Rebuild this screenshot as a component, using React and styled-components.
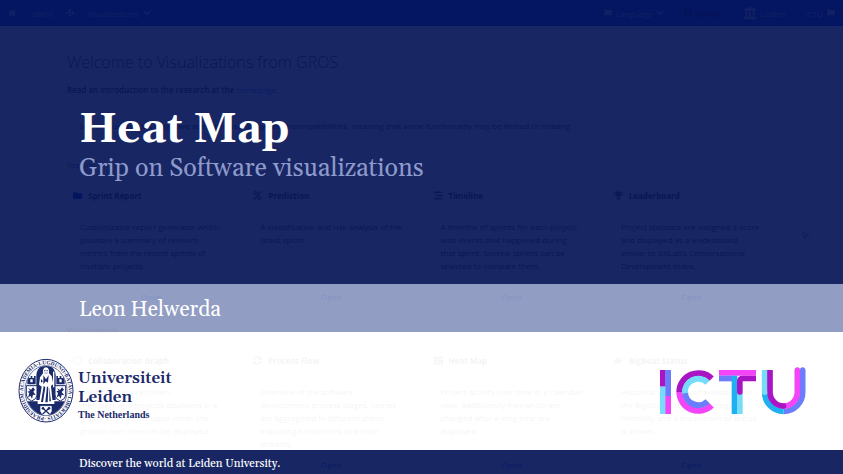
import React from 'react';
import styled, { createGlobalStyle, css } from 'styled-components';
import {
  FaHome, FaArrowsAlt, FaChevronDown, FaFlag, FaGithub, FaUniversity, FaFolder, FaPercent,
  FaStream, FaTrophy, FaRegCircle, FaSyncAlt, FaTh, FaDocker,
} from 'react-icons/fa';
import { MousePointer2 } from 'lucide-react';

const Global = createGlobalStyle`
  * { box-sizing: border-box; }
  body { margin: 0; background: #192664; }
  h1, h2, h3, p { margin: 0; }
`;

const serif = `Gelasio, Georgia, "Liberation Serif", serif`;

const Stage = styled.div`
  position: relative;
  height: 100vh;
  min-height: 474px;
  overflow: hidden;
`;

/* Dashboard page beneath the title card */
const Page = styled.div`
  background: #fff;
  color: #363636;
  font: 8px/13px "Open Sans", "Noto Sans", sans-serif;
`;

const NavBar = styled.nav`
  display: flex;
  align-items: center;
  justify-content: space-between;
  height: 26px;
  padding: 0 8px;
  background: #0025e1;
`;

const NavGroup = styled.div`
  display: flex;
  align-items: center;
  gap: ${(p) => p.$gap}px;
`;

const NavButton = styled.button`
  display: flex;
  align-items: center;
  gap: ${(p) => p.$gap || 4}px;
  padding: 0;
  border: 0;
  background: none;
  color: ${(p) => (p.$dark ? '#000' : '#b4c0f0')};
  font: inherit;
`;

const Main = styled.main`
  padding: 26px 67px 0;
`;

const PageTitle = styled.h1`
  font-size: 16px;
  font-weight: 300;
  line-height: 20px;
`;

const Intro = styled.p`
  margin-top: 12px;
  line-height: 12px;
  font-weight: 600;
  a { color: #3273dc; font-weight: 400; text-decoration: none; }
`;

const Notice = styled.p`
  margin-top: 14px;
  padding: 10px 12px;
  line-height: 12px;
  border-radius: 3px;
  background: #f5f5f5;
`;

const SectionTitle = styled.h2`
  margin: ${(p) => p.$top}px 0 14px;
  font-size: 8px;
  line-height: 12px;
  font-weight: 400;
  color: #777;
`;

const CardGrid = styled.div`
  display: grid;
  grid-template-columns: repeat(4, 1fr);
  gap: 12px;
`;

const Card = styled.article`
  display: flex;
  flex-direction: column;
  min-height: 127px;
  border: 1px solid #f6f6f6;
`;

const CardTitle = styled.h3`
  display: flex;
  align-items: center;
  gap: 6px;
  height: 19px;
  padding: 0 5px;
  font-size: 8px;
  font-weight: 700;
  border-bottom: 1px solid #f4f4f4;
  svg { width: 9px; height: 9px; color: ${(p) => p.$tint}; }
`;

const CardText = styled.p`
  flex: 1;
  padding: 15px 12px 0;
  white-space: pre-line;
`;

const CardLink = styled.a`
  padding: 8px 0;
  text-align: center;
  color: #3273dc;
  text-decoration: none;
`;

const Pointer = styled(MousePointer2)`
  position: absolute;
  left: 95%;
  top: 230px;
  width: 9px;
  height: 11px;
  color: #555;
`;

/* Title card laid over the dashboard */
const TitleCard = styled.div`
  position: absolute;
  inset: 0;
  display: grid;
  grid-template-rows: 1fr 48px 118px 24px;
  font-family: ${serif};
  color: #fff;
`;

const bands = {
  navy: css`background: rgba(4, 19, 87, 0.92);`,
  lavender: css`background: rgba(137, 149, 190, 0.92);`,
  white: css`background: rgba(255, 255, 255, 0.94);`,
};

const Band = styled.section`
  display: flex;
  flex-direction: ${(p) => (p.$column ? 'column' : 'row')};
  align-items: ${(p) => (p.$column ? 'flex-start' : 'center')};
  padding: 3px 35px 0 79px;
  ${(p) => bands[p.$tone]}
`;

const HeadBand = styled(Band)`
  padding-top: 105px;
`;

const LogoBand = styled(Band)`
  justify-content: space-between;
  padding-top: 0;
  padding-left: 18px;
`;

const Heading = styled.h1`
  font-size: 42px;
  line-height: 50px;
  font-weight: 700;
`;

const Subtitle = styled.p`
  font-size: 25px;
  line-height: 28px;
  color: #8d9acb;
`;

const Author = styled.p`
  font-size: 21px;
  line-height: 28px;
`;

const Motto = styled.p`
  font-size: 11px;
  line-height: 16px;
  font-weight: 500;
`;

const University = styled.div`
  display: flex;
  align-items: center;
  gap: 4px;
  color: #1b2a6b;
`;

const UniversityText = styled.div`
  padding-top: 9px;
`;

const UniversityName = styled.div`
  font-size: 16px;
  line-height: 19px;
  font-weight: 600;
`;

const Country = styled.div`
  font: 700 10px/16px "Liberation Serif", serif;
`;

const SealSvg = styled.svg`
  width: 56px;
  height: 66px;
`;

const IctuSvg = styled.svg`
  width: 150px;
  height: 50px;
`;

function Seal() {
  return (
    <SealSvg viewBox="23 24 168 198" role="img" aria-label="Seal of Leiden University">
      <defs>
        <path id="sealRing" d="M107 201A68 79 0 0 1 107 43A68 79 0 0 1 107 201" />
        <clipPath id="sealInner"><ellipse cx="107" cy="122" rx="62" ry="74" /></clipPath>
      </defs>
      <ellipse cx="107" cy="122" rx="81" ry="94" fill="#fff" stroke="#1b2a6b" strokeWidth="3" />
      <text fill="#1b2a6b" fontSize="16" fontWeight="700" fontFamily="Liberation Serif">
        <textPath href="#sealRing">·PRAESIDIUM·ACADEMIA·LUGDUNO·BATAVA·LIBERTATIS</textPath>
      </text>
      <ellipse cx="107" cy="122" rx="63" ry="75" fill="#fff" stroke="#1b2a6b" strokeWidth="2" />
      <g clipPath="url(#sealInner)" fill="#1b2a6b">
        <path d="M78 150V75Q80 48 107 46Q134 48 136 75V150Z" />
        <path d="M40 154H82V162H132V154H174V210H40Z" />
        <path d="M51 84V78H56V84H61V78H66V84H71V78H76V103H51Z" />
        <path d="M138 84V78H143V84H148V78H153V84H158V78H163V103H138Z" />
        <path d="M48 107H80V135Q80 147 64 153Q48 147 48 135Z" fill="#fff" stroke="#1b2a6b" strokeWidth="3" />
        <path d="M134 107H166V135Q166 147 150 153Q134 147 134 135Z" fill="#fff" stroke="#1b2a6b" strokeWidth="3" />
        <path d="M54 114L62 119L68 112L74 119L69 125L76 135L68 134L65 146L60 137L53 143L57 129L51 125L59 123Z" />
        <path d="M140 114L149 120L155 112L161 119L154 126L162 136L154 134L151 146L146 137L139 143L143 129L138 124L145 122Z" />
        <path d="M60 88h7v9h-7zM147 88h7v9h-7z" fill="#fff" />
        <path d="M98 70Q96 53 107 52Q118 53 116 70L124 78L129 102L122 108L127 158H86L94 110L86 104L89 82Z" fill="#fff" />
        <path d="M102 60h3v4h-3zM109 60h3v4h-3zM102 68h10v2h-10zM99 76L107 88L115 76L113 98L106 94L99 103ZM100 108L105 112L98 156H92ZM110 108L114 114L112 157H105ZM117 112L122 154H117ZM92 87L98 94L92 98Z" />
        <path d="M128 66L132 63V112H128Z" fill="#fff" />
        <path d="M91 169H123V183Q123 191 107 199Q91 191 91 183Z" fill="#fff" stroke="#fff" strokeWidth="2" />
        <path d="M97 174L117 192M117 174L97 192" stroke="#1b2a6b" strokeWidth="4" />
        <circle cx="98" cy="175" r="4" /><circle cx="116" cy="175" r="4" />
      </g>
    </SealSvg>
  );
}

function IctuLogo() {
  return (
    <IctuSvg viewBox="54 48 450 150" role="img" aria-label="ICTU">
      <path d="M60 60h17v50h-17z" fill="#a914c4" />
      <path d="M60 110h17v82h-17z" fill="#75dcfa" />
      <path d="M76 60h17v79h-17z" fill="#6b7dfa" />
      <path d="M76 138h17v54h-17z" fill="#f345f7" />
      <g fill="none" strokeWidth="18">
        <path d="M118 126A57 57 0 0 0 215 166" stroke="#f345f7" />
        <path d="M118 126A57 57 0 0 1 215 86" stroke="#a914c4" />
        <path d="M135 126A40 40 0 0 0 203 154" stroke="#6b7dfa" />
        <path d="M203 98A40 40 0 0 0 135 130" stroke="#75dcfa" />
      </g>
      <path d="M237 60h111v17H237z" fill="#f345f7" />
      <path d="M237 77h40v17h-40z" fill="#6b7dfa" />
      <path d="M275 77h17v115h-17z" fill="#1fb0f1" />
      <path d="M291 128h17v64h-17z" fill="#75dcfa" />
      <path d="M291 94Q291 77 308 77H348V94H308V126Q308 134 300 134Q291 134 291 126Z" fill="#a914c4" />
      <g fill="none" strokeWidth="17">
        <path d="M488 60V127A57 57 0 0 1 431 184" stroke="#6b7dfa" />
        <path d="M472 60V127A41 41 0 0 1 431 168" stroke="#f345f7" />
        <path d="M374 127A57 57 0 0 0 431 184" stroke="#1fb0f1" />
        <path d="M374 60V127" stroke="#75dcfa" />
        <path d="M390 60V127A41 41 0 0 0 431 168" stroke="#a914c4" />
      </g>
      <circle cx="374" cy="127" r="8" fill="#75dcfa" />
      <circle cx="431" cy="168" r="8" fill="#a914c4" />
      <circle cx="472" cy="60" r="8" fill="#f345f7" />
      <circle cx="488" cy="60" r="8" fill="#6b7dfa" />
    </IctuSvg>
  );
}

const reports = [
  { title: 'Sprint Report', icon: FaFolder, tint: '#0020a0', text: 'Customizable report generator which\nprovides a summary of relevant\nmetrics from the recent sprints of\nmultiple projects.' },
  { title: 'Prediction', icon: FaPercent, text: 'A classification and risk analysis of the\nlatest sprint.' },
  { title: 'Timeline', icon: FaStream, text: 'A timeline of sprints for each project,\nwith events that happened during\nthat sprint. Several sprints can be\nselected to compare them.' },
  { title: 'Leaderboard', icon: FaTrophy, text: 'Project statistics are assigned a score\nand displayed as a leaderboard,\nsimilar to GitLab’s Conversational\nDevelopment Index.' },
];

const graphs = [
  { title: 'Collaboration Graph', icon: FaRegCircle, text: 'Relations between team\nmembers and projects displayed in a\ngraph. With a time lapse mode the\ngrowth over time can be displayed.' },
  { title: 'Process Flow', icon: FaSyncAlt, text: 'Overview of the software\ndevelopment process stages. Stories\nare aggregated in different states,\nindicating bottlenecks and main\nstreams.' },
  { title: 'Heat Map', icon: FaTh, text: 'Project activity over time in a calendar\nview. Additionally files which are\nchanged after a long time are\ndisplayed.' },
  { title: 'BigBoat Status', icon: FaDocker, tint: '#4060a0', text: 'Historical overview of availability of\nthe BigBoat platform. Aggregated\nreliability and a breakdown of status\nis shown.' },
];

function Cards({ items }) {
  return (
    <CardGrid>
      {items.map(({ title, icon: Icon, tint, text }) => (
        <Card key={title}>
          <CardTitle $tint={tint || '#555'}><Icon />{title}</CardTitle>
          <CardText>{text}</CardText>
          <CardLink href="#open">Open</CardLink>
        </Card>
      ))}
    </CardGrid>
  );
}

export default function App() {
  return (
    <Stage>
      <Global />
      <Page>
        <NavBar>
          <NavGroup $gap={13}>
            <NavButton $gap={16}><FaHome />GROS</NavButton>
            <NavButton><FaArrowsAlt /></NavButton>
            <NavButton $gap={5}>Visualizations<FaChevronDown /></NavButton>
          </NavGroup>
          <NavGroup $gap={20}>
            <NavButton><FaFlag />Language<FaChevronDown /></NavButton>
            <NavButton $dark><FaGithub />GitHub</NavButton>
            <NavButton><FaUniversity size={14} />Leiden</NavButton>
            <NavButton>ICTU<FaFlag /></NavButton>
          </NavGroup>
        </NavBar>
        <Main>
          <PageTitle>Welcome to Visualizations from GROS</PageTitle>
          <Intro>Read an introduction to the research at the <a href="#homepage">homepage</a>.</Intro>
          <Notice>
            Some visualizations may have some browser or system incompatibilities, meaning that some functionality may be limited or missing.
          </Notice>
          <SectionTitle $top={17}>Reports</SectionTitle>
          <Cards items={reports} />
          <SectionTitle $top={12}>Visualizations</SectionTitle>
          <Cards items={graphs} />
        </Main>
        <Pointer />
      </Page>
      <TitleCard>
        <HeadBand $tone="navy" $column>
          <Heading>Heat Map</Heading>
          <Subtitle>Grip on Software visualizations</Subtitle>
        </HeadBand>
        <Band $tone="lavender"><Author>Leon Helwerda</Author></Band>
        <LogoBand $tone="white">
          <University>
            <Seal />
            <UniversityText>
              <UniversityName>Universiteit<br />Leiden</UniversityName>
              <Country>The Netherlands</Country>
            </UniversityText>
          </University>
          <IctuLogo />
        </LogoBand>
        <Band $tone="navy"><Motto>Discover the world at Leiden University.</Motto></Band>
      </TitleCard>
    </Stage>
  );
}
